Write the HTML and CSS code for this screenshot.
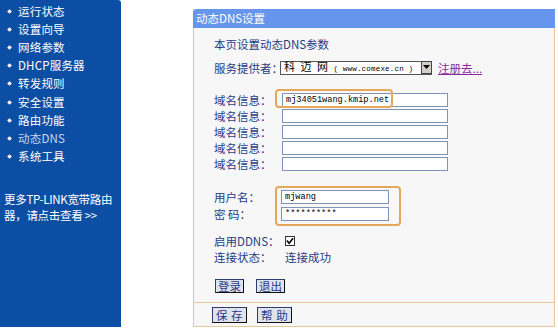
FILE: index.html
```html
<!DOCTYPE html>
<html lang="zh">
<head>
<meta charset="utf-8">
<link rel="stylesheet" href="styles.css">
</head>
<body>
<div class="page">
  <aside class="side">
    <ul class="menu">
      <li><span class="dot"></span>运行状态</li>
      <li><span class="dot"></span>设置向导</li>
      <li><span class="dot"></span>网络参数</li>
      <li><span class="dot"></span>DHCP服务器</li>
      <li><span class="dot"></span>转发规则</li>
      <li><span class="dot"></span>安全设置</li>
      <li><span class="dot"></span>路由功能</li>
      <li class="active"><span class="dot"></span>动态DNS</li>
      <li><span class="dot"></span>系统工具</li>
    </ul>
    <p class="more">更多TP-LINK宽带路由<br>器，请点击查看 &gt;&gt;</p>
  </aside>
  <main class="main">
    <section class="panel">
      <div class="head">动态DNS设置</div>
      <div class="body">
        <div class="intro">本页设置动态DNS参数</div>
        <div class="row provider">
          <span class="lbl">服务提供者：</span>
          <span class="select"><span class="sel-text">科 迈 网 <span class="mono">( www.comexe.cn )</span></span><span class="arrow"><svg width="7" height="4" viewBox="0 0 7 4"><path d="M0 0h7L3.5 4z" fill="#000"/></svg></span></span>
          <a class="reg" href="#">注册去...</a>
        </div>
        <div class="domains">
          <div class="row"><span class="lbl">域名信息：</span><span class="cell"><span class="input wide">mj34051wang.kmip.net</span><span class="hl hl1"></span></span></div>
          <div class="row"><span class="lbl">域名信息：</span><span class="input wide"></span></div>
          <div class="row"><span class="lbl">域名信息：</span><span class="input wide"></span></div>
          <div class="row"><span class="lbl">域名信息：</span><span class="input wide"></span></div>
          <div class="row"><span class="lbl">域名信息：</span><span class="input wide"></span></div>
        </div>
        <div class="account">
          <div class="acc-rows">
            <div class="row"><span class="lbl">用户名：</span><span class="input short">mjwang</span></div>
            <div class="row"><span class="lbl">密&nbsp;码：</span><span class="input short">**********</span></div>
          </div>
          <span class="hl hl2"></span>
        </div>
        <div class="status">
          <div class="row"><span class="lbl">启用DDNS：</span><span class="check"><svg width="9" height="8" viewBox="0 0 9 8"><path d="M1 3.5l2.5 3L8 0.8" fill="none" stroke="#000" stroke-width="1.8"/></svg></span></div>
          <div class="row"><span class="lbl">连接状态：</span><span class="val">连接成功</span></div>
        </div>
        <div class="btns">
          <span class="btn">登录</span>
          <span class="btn">退出</span>
        </div>
      </div>
      <div class="foot">
        <span class="btn spaced">保 存</span>
        <span class="btn spaced">帮 助</span>
      </div>
    </section>
  </main>
</div>
</body>
</html>
```
FILE: styles.css
```css
* { box-sizing: border-box; }
html, body { margin: 0; padding: 0; background: #fff; }
body {
  width: 558px; height: 330px; overflow: hidden;
  font-family: "Noto Sans CJK SC", "DejaVu Sans", sans-serif;
  font-size: 11.5px;
}
.page { display: flex; align-items: flex-start; }
.side {
  width: 121px; height: 327px;
  background: #0c4ea3;
  color: #fff;
  border-top-right-radius: 3px;
}
.menu { list-style: none; margin: 0; padding: 2px 0 0 0; }
.menu li {
  height: 18.2px; line-height: 17px;
  display: flex; align-items: center;
  padding-left: 8px;
  font-size: 11.5px;
  letter-spacing: 0.2px;
}
.menu li.active { color: #c9d6ec; }
.dot {
  width: 3px; height: 3px; background: #fff; margin-right: 7px;
  transform: rotate(45deg);
  box-shadow: 0 0 1px #fff;
}
.more {
  margin: 25px 0 0 0; padding-left: 4px;
  font-size: 11.5px; line-height: 16px;
  letter-spacing: -0.3px;
}
.main { padding: 9px 0 0 72px; }
.panel {
  width: 362px; height: 318px;
  background: #f7f7f7;
  border: 1px solid #e6c999;
  border-top: none;
  display: flex; flex-direction: column;
  position: relative;
}
.head {
  height: 19px; line-height: 19px;
  background: #6595ec;
  color: #fff;
  padding-left: 3px;
  font-size: 11.5px;
  border-top-left-radius: 4px;
  margin: 0 -1px;
}
.body { flex: 1; padding: 8px 0 0 20px; color: #1f3b86; }
.intro { height: 16px; line-height: 16px; }
.row { display: flex; align-items: center; height: 16px; }
.lbl { width: 67px; flex: none; white-space: nowrap; }
.provider { margin-top: 8px; height: 15px; }
.select {
  display: flex; align-items: center;
  width: 152px; height: 14px; margin-left: -1px;
  border: 1px solid #555;
  border-right: none;
  background: #fff;
  color: #000;
}
.sel-text { flex: 1; padding-left: 3px; font-size: 11px; line-height: 12px; white-space: nowrap; letter-spacing: 1.5px; }
.mono { font-family: "Liberation Mono", monospace; font-size: 7.5px; letter-spacing: 0.2px; }
.arrow {
  width: 11px; height: 13px; margin-top: -1px;
  background: #d4d0c8;
  border: 1px solid #444;
  display: flex; align-items: center; justify-content: center;
}
.reg { margin-left: 6px; color: #8a2a9e; text-decoration: underline; font-size: 11.5px; }
.domains { margin-top: 17px; }
.cell { position: relative; display: flex; }
.input {
  display: block; height: 14px;
  background: #fff;
  border: 1px solid #7f93b9;
  color: #000;
  font-family: "Liberation Mono", monospace;
  font-size: 8.6px; line-height: 12px;
  padding-left: 3px;
  white-space: nowrap;
}
.wide { width: 166px; margin-left: 1px; }
.short { width: 108px; }
.hl { position: absolute; border: 2px solid #e4a85c; border-radius: 4px; pointer-events: none; }
.hl1 { left: -6px; top: -4px; width: 118px; height: 19px; }
.account { position: relative; margin-top: 17px; }
.acc-rows .row { height: 16.5px; }
.hl2 { left: 61px; top: -3px; width: 126px; height: 40px; }
.status { margin-top: 11px; }
.check {
  width: 10px; height: 10px; margin-left: 4px;
  border: 1px solid #333; background: #fff;
  display: flex; align-items: center; justify-content: center;
}
.val { margin-left: 4px; }
.btns { display: flex; gap: 12px; margin-top: 14px; margin-left: 1px; }
.btn {
  display: inline-flex; align-items: center; justify-content: center;
  height: 14px; padding: 0 2px;
  background: #dfe3ee;
  border: 1px solid #2d3d6c;
  border-right-color: #111; border-bottom-color: #111;
  color: #1f3b86;
  font-size: 11.5px;
  white-space: nowrap;
}
.foot {
  height: 24px;
  border-top: 1px solid #e6c999;
  display: flex; align-items: center; gap: 10px;
  padding-left: 18px;
}
.spaced { height: 16px; padding: 0 3px; letter-spacing: 0.5px; }
```
